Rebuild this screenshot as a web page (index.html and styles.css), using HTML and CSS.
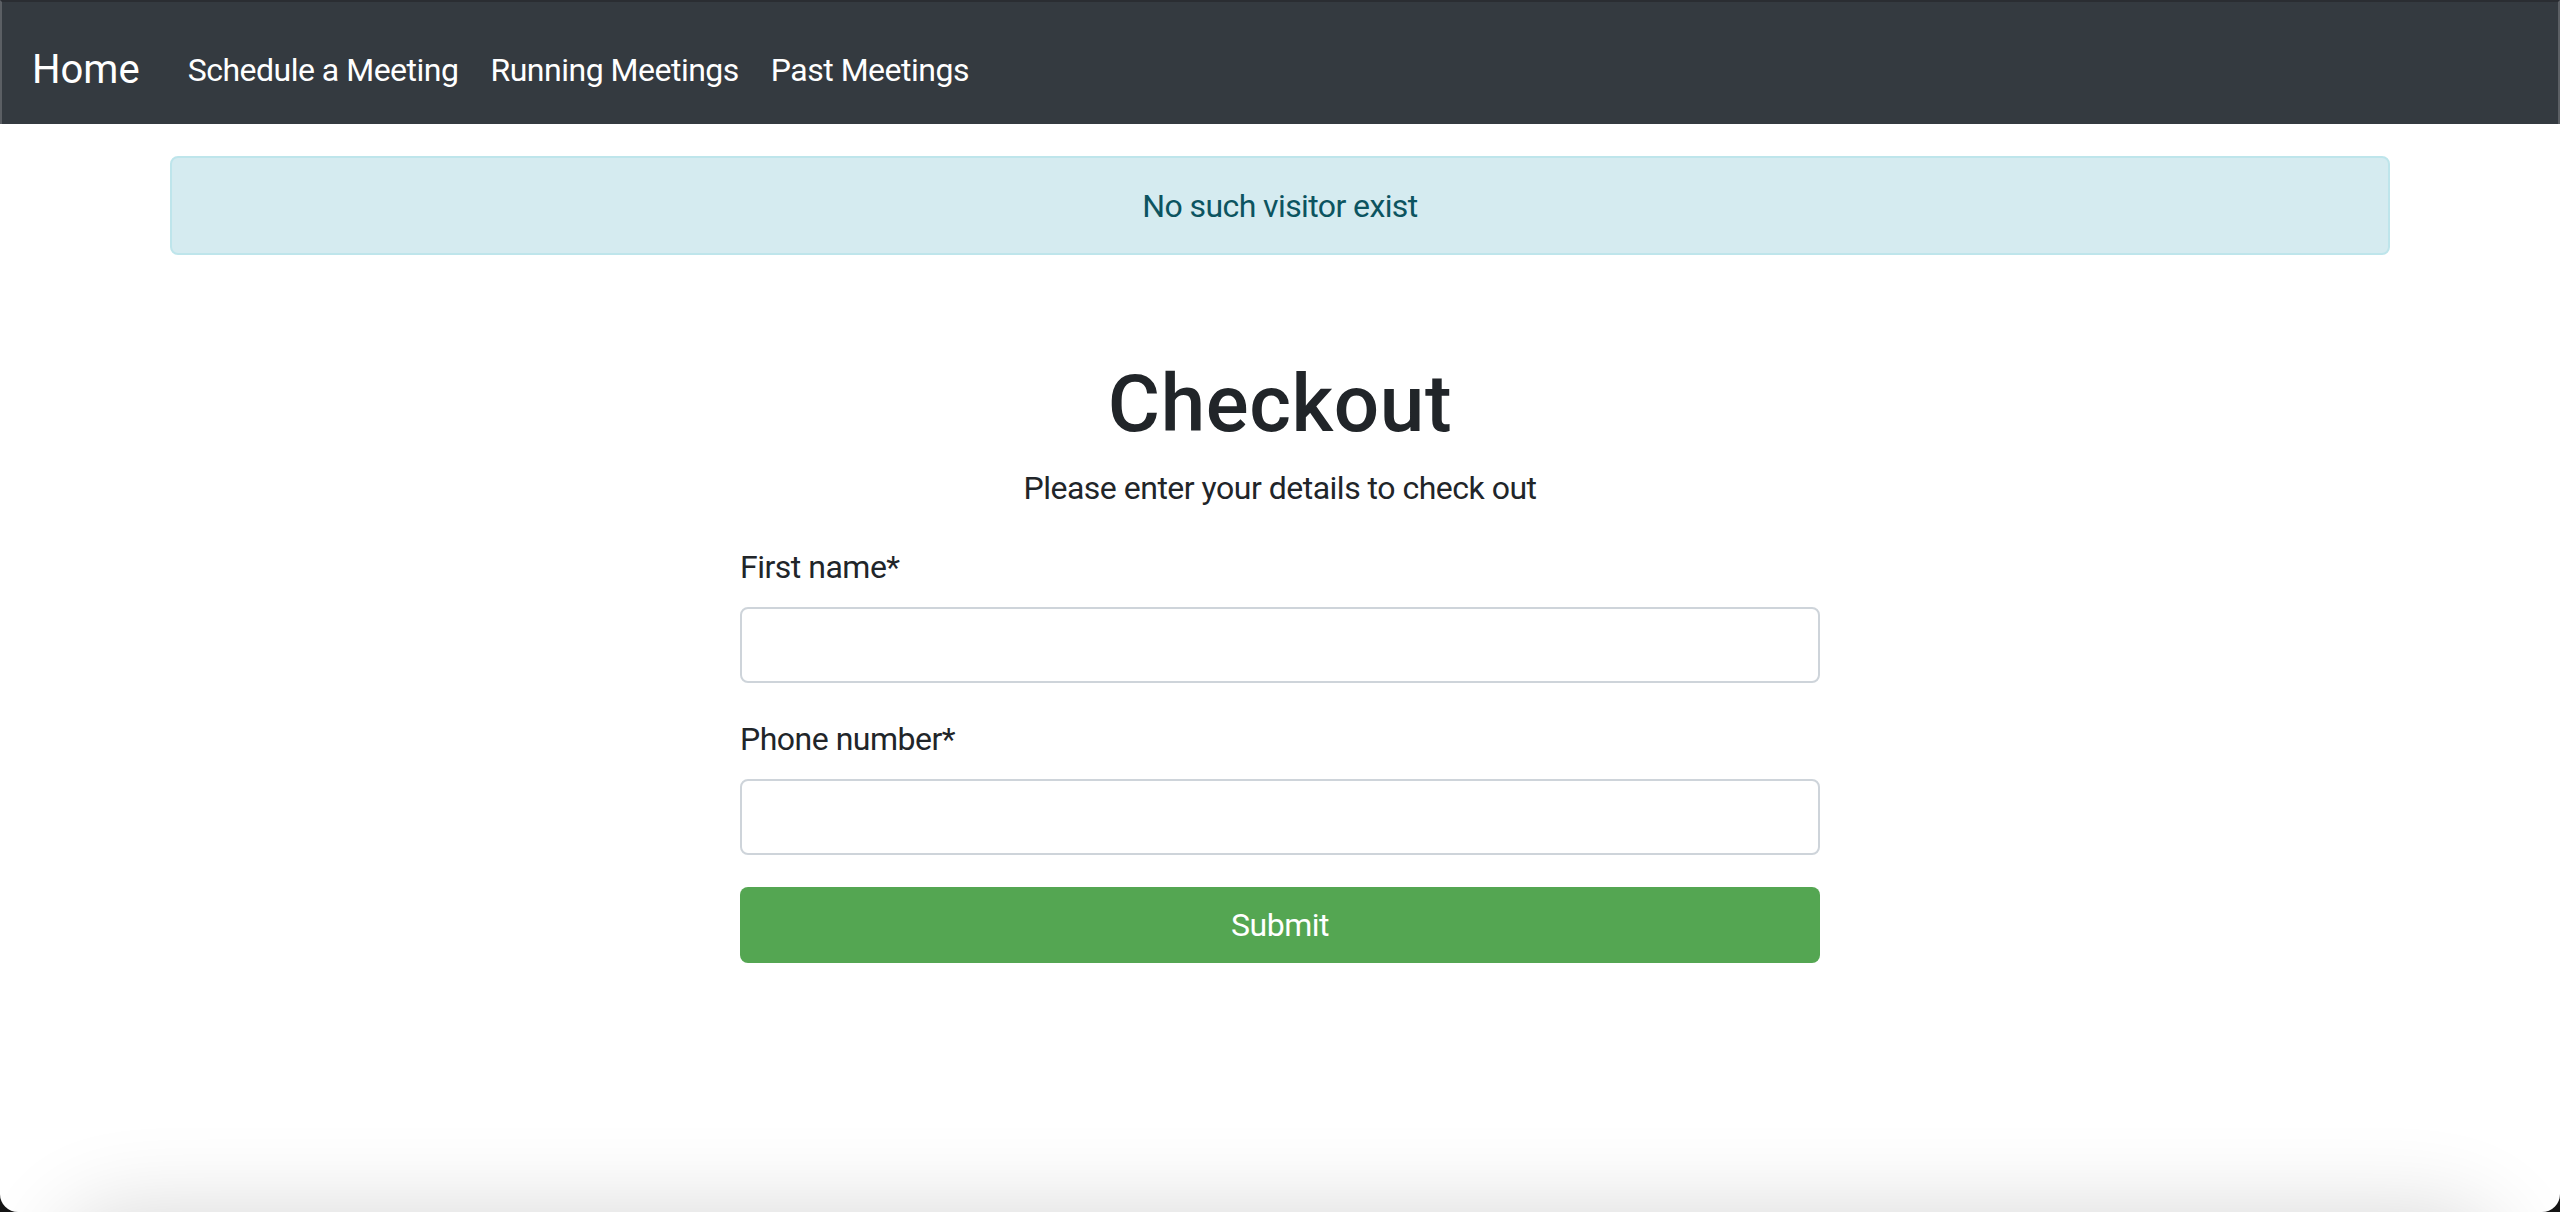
FILE: index.html
```html
<!DOCTYPE html>
<html lang="en">
<head>
<meta charset="utf-8">
<title>Checkout</title>
<link rel="stylesheet" href="styles.css">
</head>
<body>
<div class="window">
  <nav class="navbar">
    <a class="brand" href="#">Home</a>
    <a class="nav-link" href="#">Schedule a Meeting</a>
    <a class="nav-link" href="#">Running Meetings</a>
    <a class="nav-link" href="#">Past Meetings</a>
  </nav>
  <main class="container">
    <div class="alert">No such visitor exist</div>
    <h1 class="title">Checkout</h1>
    <p class="subtitle">Please enter your details to check out</p>
    <form class="form">
      <div class="form-group">
        <label class="label" for="fname">First name*</label>
        <input class="input" id="fname" type="text">
      </div>
      <div class="form-group">
        <label class="label" for="phone">Phone number*</label>
        <input class="input" id="phone" type="text">
      </div>
      <button class="btn" type="button">Submit</button>
    </form>
  </main>
  <div class="shade"></div>
</div>
</body>
</html>
```
FILE: styles.css
```css
html {
  background: #141414;
}
body {
  margin: 0;
}
.window {
  position: relative;
  height: 1212px;
  background: #fff;
  border-radius: 0 0 18px 18px;
  overflow: hidden;
  font-family: Roboto, "Liberation Sans", Arial, sans-serif;
  color: #212529;
  letter-spacing: -0.5px;
}
.navbar {
  box-sizing: border-box;
  height: 124px;
  background: #343a40;
  border-top: 2px solid #2a2d32;
  border-left: 2px solid #5b5f64;
  border-right: 2px solid #5b5f64;
  display: flex;
  align-items: center;
  padding: 13px 30px 0;
}
.brand {
  font-size: 40px;
  line-height: 60px;
  color: #fff;
  text-decoration: none;
  margin-right: 32px;
  letter-spacing: 0;
}
.nav-link {
  font-size: 32px;
  line-height: 48px;
  color: #fff;
  text-decoration: none;
  padding: 0 16px;
}
.container {
  width: 2220px;
  margin: 0 auto;
  padding-top: 32px;
}
.alert {
  box-sizing: border-box;
  height: 99px;
  border: 2px solid #bee5eb;
  background: #d5ebf0;
  color: #0c5460;
  border-radius: 8px;
  font-size: 32px;
  line-height: 97px;
  text-align: center;
  letter-spacing: -0.6px;
}
.title {
  margin: 101px 0 0;
  font-size: 80px;
  line-height: 96px;
  font-weight: 500;
  text-align: center;
  letter-spacing: 0.6px;
}
.subtitle {
  margin: 12px 0 31px;
  font-size: 32px;
  line-height: 48px;
  text-align: center;
}
.form {
  width: 1080px;
  margin: 0 auto;
}
.form-group {
  margin-bottom: 32px;
}
.label {
  display: block;
  font-size: 32px;
  line-height: 48px;
  margin-bottom: 16px;
}
.input {
  display: block;
  box-sizing: border-box;
  width: 100%;
  height: 76px;
  border: 2px solid #ced4da;
  border-radius: 8px;
  background: #fff;
  margin: 0;
}
.btn {
  display: block;
  width: 100%;
  height: 76px;
  border: 0;
  border-radius: 8px;
  background: #54a652;
  color: #fff;
  font-family: inherit;
  font-size: 32px;
  letter-spacing: -0.5px;
}
.shade {
  position: absolute;
  left: 60px;
  right: 60px;
  top: 1212px;
  height: 200px;
  border-radius: 60px;
  box-shadow: 0 0 90px rgba(0, 0, 0, 0.16);
}
```
